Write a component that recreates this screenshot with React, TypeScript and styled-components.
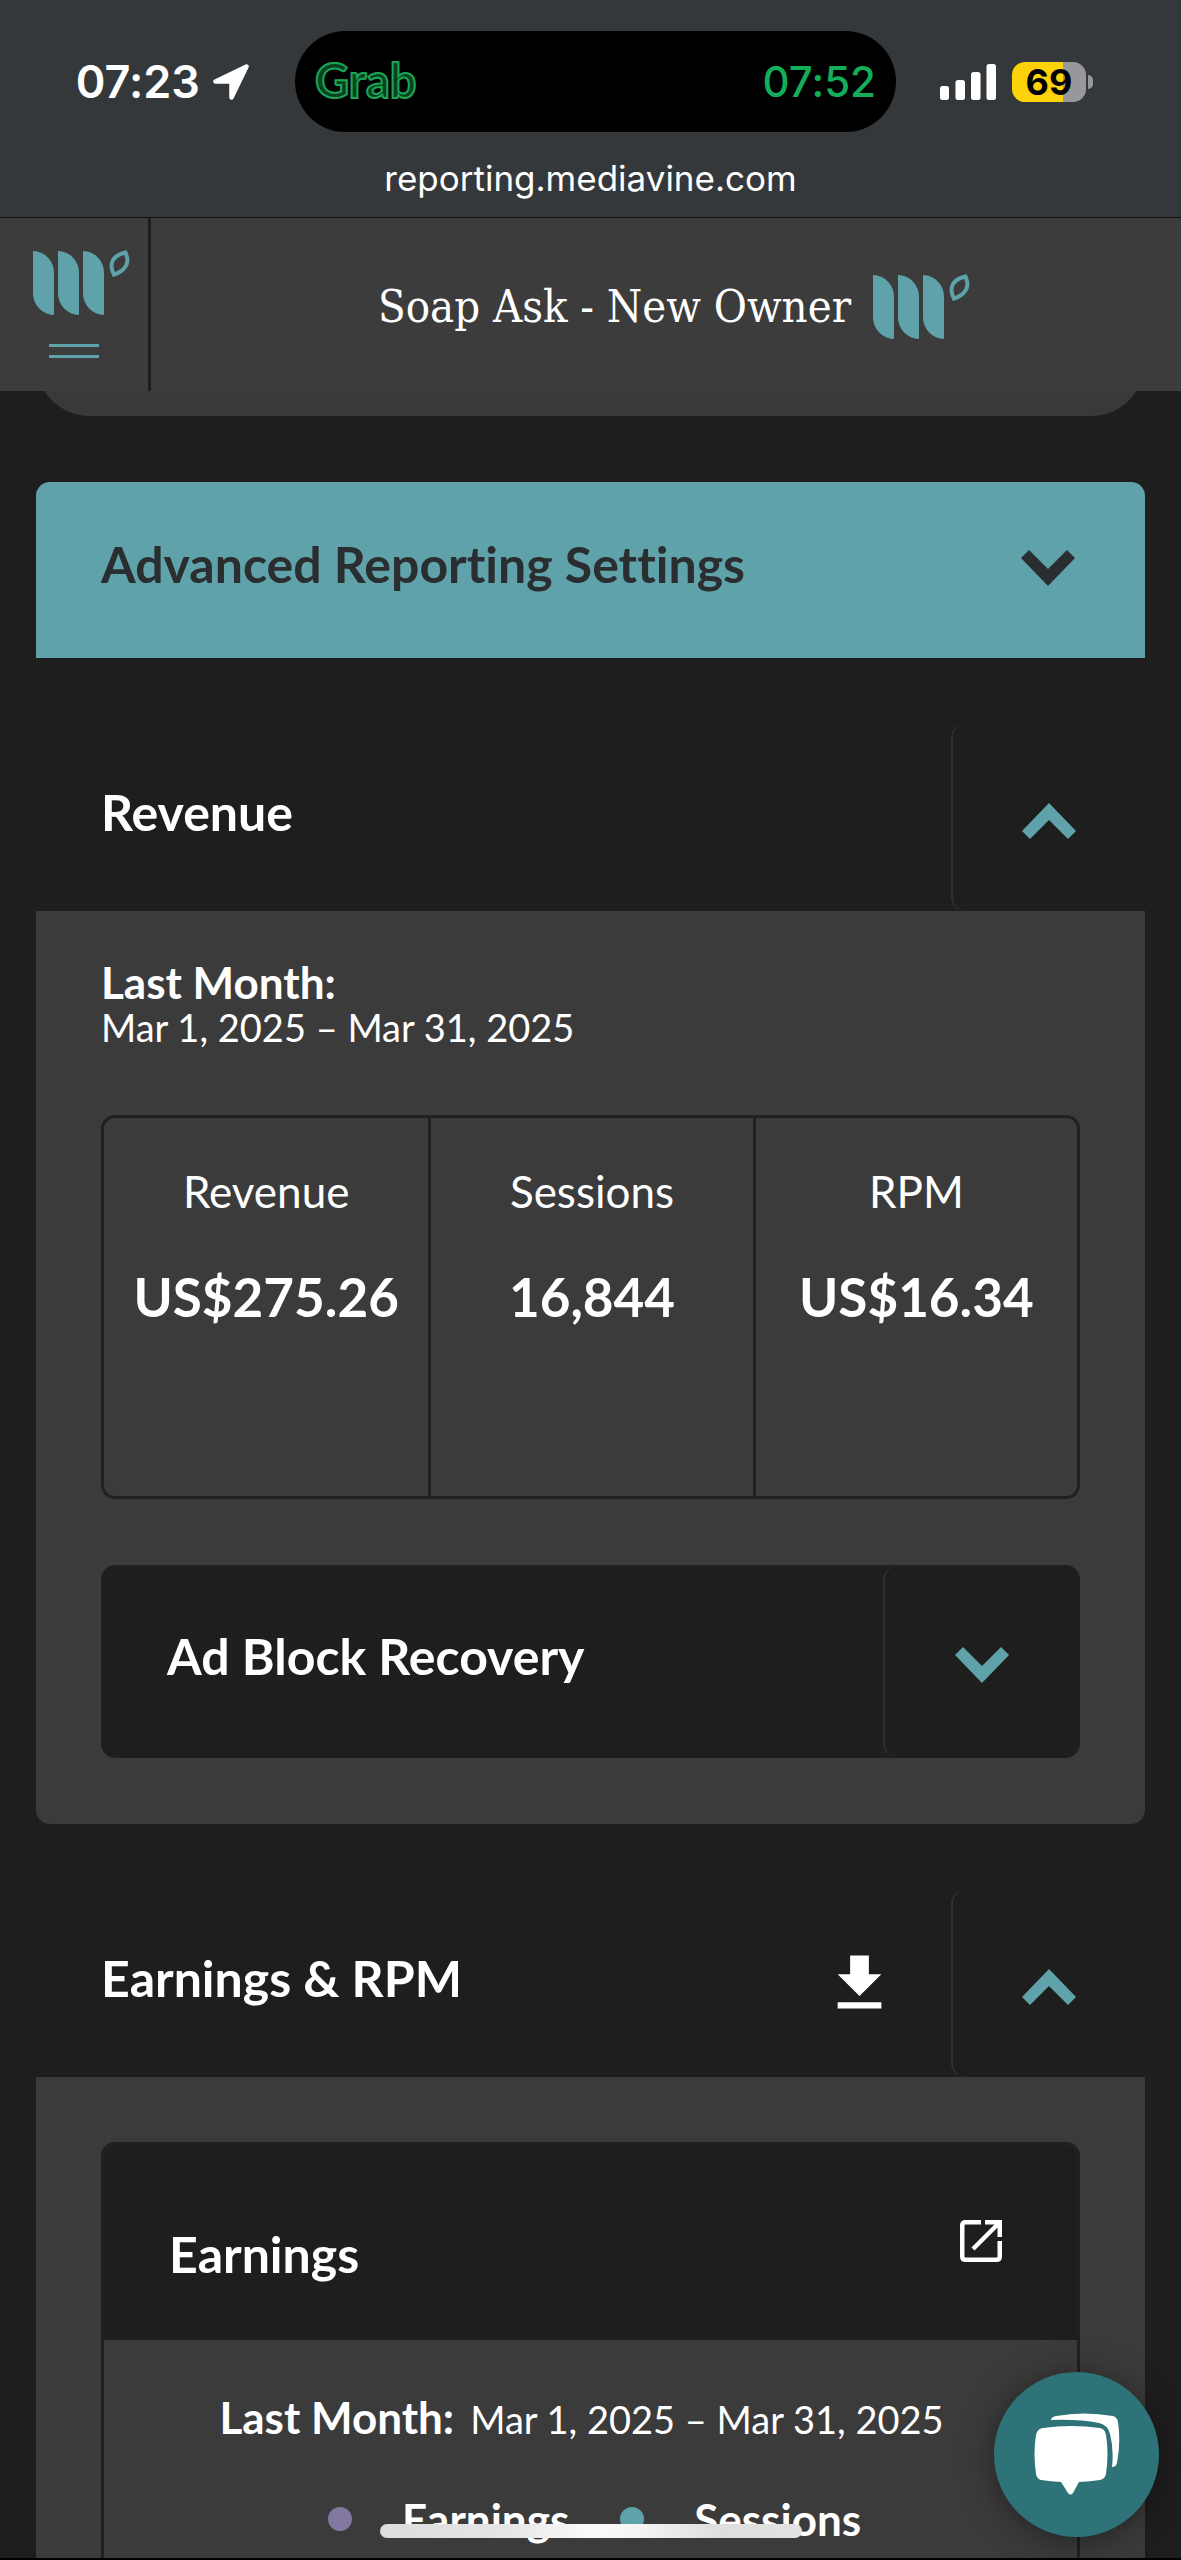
import React, { useState } from "react";
import styled, { createGlobalStyle } from "styled-components";

const teal = "#5fa2aa";
const ink = "#1e1e1e";
const panel = "#3b3b3b";

const GlobalStyle = createGlobalStyle`
  *, *::before, *::after { box-sizing: border-box; }
  body { margin: 0; background: ${ink}; }
  button { font: inherit; color: inherit; border: 0; background: none; padding: 0; cursor: pointer; }
  h1, h2, h3, p, dl, dd, dt, ul { margin: 0; padding: 0; }
  ul { list-style: none; }
`;

const Screen = styled.div`
  height: 100vh;
  min-height: 800px;
  overflow: hidden;
  position: relative;
  display: flex;
  flex-direction: column;
  background: ${ink};
  border-bottom: 2px solid #000;
  color: #fff;
  font-family: Lato, "Open Sans", sans-serif;
  font-variant-ligatures: none;
  > * { flex-shrink: 0; }
`;

/* ---------- phone chrome ---------- */

const PhoneBar = styled.div`
  background: #35383b;
  border-bottom: 1px solid #111;
  padding-top: 31px;
  height: 218px;
  font-family: Inter, "Liberation Sans", sans-serif;
`;

const StatusRow = styled.div`
  display: grid;
  grid-template-columns: 1fr 601px 1fr;
  align-items: center;
  height: 101px;
  padding-left: 10px;
`;

const Clock = styled.div`
  display: flex;
  align-items: center;
  justify-content: flex-end;
  gap: 13px;
  padding-right: 46px;
  font-size: 45px;
  font-weight: 600;
  line-height: 56px;
`;

const Island = styled.div`
  display: flex;
  align-items: center;
  justify-content: space-between;
  height: 101px;
  padding: 0 20px;
  border-radius: 51px;
  background: #000;
`;

const GrabLogo = styled.span`
  padding-bottom: 3px;
  font-family: Lato, sans-serif;
  font-size: 47px;
  font-weight: 700;
  line-height: 56px;
  color: #06441f;
  -webkit-text-stroke: 2px #1da457;
`;

const CallTime = styled.span`
  font-size: 42px;
  font-weight: 500;
  line-height: 56px;
  color: #14ad5a;
`;

const Radios = styled.div`
  display: flex;
  align-items: center;
  gap: 16px;
  padding-left: 44px;
`;

const Battery = styled.div`
  display: flex;
  align-items: center;
  gap: 2px;
`;

const BatteryCell = styled.div`
  width: 74px;
  height: 40px;
  border-radius: 13px;
  background: linear-gradient(90deg, #fdd20a 69%, #98989b 69%);
  color: #000;
  font-size: 36px;
  font-weight: 700;
  line-height: 40px;
  text-align: center;
`;

const BatteryNub = styled.div`
  width: 5px;
  height: 14px;
  border-radius: 0 7px 7px 0;
  background: #98989b;
`;

const Address = styled.div`
  padding-top: 22px;
  text-align: center;
  font-size: 35px;
  line-height: 48px;
`;

/* ---------- site header ---------- */

const SiteHeader = styled.header`
  display: flex;
  height: 173px;
  background: #3c3c3c;
`;

const MenuButton = styled.button`
  width: 151px;
  display: flex;
  flex-direction: column;
  align-items: center;
  gap: 28px;
  padding: 32px 0 0 14px;
  border-right: 3px solid ${ink};
`;

const MenuLines = styled.span`
  width: 50px;
  height: 14px;
  margin-right: 14px;
  border-top: 3px solid ${teal};
  border-bottom: 3px solid ${teal};
`;

const SiteTitle = styled.div`
  flex: 1;
  display: flex;
  align-items: center;
  justify-content: center;
  gap: 22px;
  padding: 4px 0 0 16px;
`;

const SiteName = styled.h1`
  font-family: "Roboto Slab", "DejaVu Serif Condensed", "DejaVu Serif", serif;
  font-size: 45px;
  font-weight: 400;
  line-height: 56px;
  white-space: nowrap;
`;

/* ---------- report panels ---------- */

const Main = styled.main`
  display: flex;
  flex-direction: column;
  gap: 66px;
  padding: 0 36px;
`;

const ScrolledCard = styled.div`
  height: 25px;
  overflow: hidden;
  display: flex;
  align-items: flex-end;
  &::after {
    content: "";
    flex: 1;
    height: 120px;
    border-radius: 54px;
    background: #393939;
  }
`;

const Panel = styled.section`
  border-radius: 14px;
  overflow: hidden;
  background: ${panel};
`;

const SettingsButton = styled.button`
  width: 100%;
  height: 176px;
  display: flex;
  align-items: center;
  border-radius: 14px 14px 0 0;
  background: ${teal};
  color: #2b2e30;
  text-align: left;
`;

const BarTitle = styled.h2`
  flex: 1;
  padding: 0 0 12px 65px;
  font-size: 50px;
  font-weight: 700;
  line-height: 58px;
`;

const ChevronSlot = styled.span`
  width: 194px;
  display: flex;
  justify-content: center;
  padding-bottom: 4px;
`;

const PanelBar = styled.div`
  height: 187px;
  display: flex;
  align-items: center;
  background: ${ink};
`;

const Toggle = styled.button`
  width: 194px;
  align-self: stretch;
  display: flex;
  align-items: center;
  justify-content: center;
  padding-top: 6px;
  border-left: 2px solid #303030;
  border-radius: 14px 0 0 14px;
  color: ${teal};
`;

const DownloadButton = styled.button`
  display: flex;
  margin-right: 54px;
`;

const PanelBody = styled.div<{ $top: number }>`
  display: flex;
  flex-direction: column;
  gap: 66px;
  padding: ${(p) => p.$top}px 65px 66px;
`;

const Period = styled.p`
  font-size: 38px;
  font-weight: 400;
  line-height: 43px;
`;

const PeriodLabel = styled.strong`
  font-size: 44px;
  font-weight: 700;
  line-height: 32px;
`;

const Metrics = styled.dl`
  display: grid;
  grid-template-columns: repeat(3, 1fr);
  border: 3px solid #202020;
  border-radius: 14px;
`;

const Metric = styled.div`
  padding: 48px 0 169px;
  text-align: center;
  & + & { border-left: 3px solid #202020; }
`;

const MetricName = styled.dt`
  margin-bottom: 51px;
  font-size: 44px;
  line-height: 50px;
`;

const MetricValue = styled.dd`
  font-size: 53px;
  font-weight: 700;
  line-height: 60px;
`;

const InnerBar = styled(PanelBar)`
  height: 193px;
  border: 1px solid #202020;
  border-radius: 14px;
  overflow: hidden;
  button { width: 196px; }
`;

const ChartCard = styled.article`
  border: 3px solid #202020;
  border-radius: 14px;
  overflow: hidden;
`;

const ChartBar = styled.div`
  height: 195px;
  display: flex;
  align-items: center;
  justify-content: space-between;
  padding: 0 75px 0 65px;
  background: ${ink};
`;

const ChartTitle = styled.h3`
  padding-top: 22px;
  font-size: 50px;
  font-weight: 700;
  line-height: 58px;
`;

const ChartBody = styled.div`
  display: flex;
  flex-direction: column;
  align-items: center;
  gap: 56px;
  padding: 57px 0 120px;
`;

const ChartPeriod = styled(Period)`
  padding-right: 18px;
  line-height: 44px;
  strong { margin-right: 16px; }
`;

const Legend = styled.ul`
  display: flex;
  gap: 51px;
  padding-left: 8px;
`;

const LegendItem = styled.li<{ $dot: string }>`
  display: flex;
  align-items: center;
  gap: 50px;
  font-size: 44px;
  font-weight: 700;
  line-height: 44px;
  &::before {
    content: "";
    width: 24px;
    height: 24px;
    border-radius: 50%;
    background: ${(p) => p.$dot};
  }
`;

/* ---------- floating parts ---------- */

const ChatButton = styled.button`
  position: absolute;
  right: 22px;
  bottom: 21px;
  width: 165px;
  height: 165px;
  border-radius: 50%;
  background: #2d7377;
  box-shadow: 0 4px 34px rgba(0, 0, 0, 0.4);
  svg { display: block; margin: auto; }
`;

const HomeIndicator = styled.div`
  position: absolute;
  left: 50%;
  bottom: 20px;
  width: 422px;
  height: 14px;
  margin-left: -211px;
  border-radius: 7px;
  background: linear-gradient(90deg, #dcdcdc, #e6e6e6 30%, #fafafa 50%, #f4f4f4 62%, #dedede 80%, #e2e2e2);
`;

/* ---------- drawings ---------- */

const LeafLogo = () => (
  <svg width="97" height="66" viewBox="0 0 97 66" aria-hidden="true">
    <g fill={teal}>
      <path d="M0 1A21 22 0 0 1 21 23V65A21 22 0 0 1 0 43Z" />
      <path d="M25 1A21 22 0 0 1 46 23V65A21 22 0 0 1 25 43Z" />
      <path d="M50 1A21 22 0 0 1 71 23V65A21 22 0 0 1 50 43Z" />
    </g>
    <path d="M92.5 2.5C82 5 76 11 79.500 21L81 24.500C90 22 96 15 94 7Z" fill="none" stroke={teal} strokeWidth="4" />
  </svg>
);

const Chevron = ({ up = false }: { up?: boolean }) => (
  <svg width="54" height="36" viewBox="0 0 54 36" aria-hidden="true">
    <path
      fill="currentColor"
      d={up ? "M27 0L54 28L46 36L27 17L8 36L0 28Z" : "M27 36L54 8L46 0L27 19L8 0L0 8Z"}
    />
  </svg>
);

const LocationArrow = () => (
  <svg width="36" height="36" viewBox="0 0 36 36" aria-hidden="true">
    <path d="M33.500 2.500L2.500 17.500H18.500V33.500Z" fill="#fff" stroke="#fff" strokeWidth="4.500" strokeLinejoin="round" />
  </svg>
);

const Signal = () => (
  <svg width="56" height="36" viewBox="0 0 56 36" fill="#fff" aria-hidden="true">
    <rect x="0" y="22" width="9" height="14" rx="2.500" />
    <rect x="15.500" y="16" width="9.500" height="20" rx="2.500" />
    <rect x="31" y="8" width="9.500" height="28" rx="2.500" />
    <rect x="46.500" y="0" width="9.500" height="36" rx="2.500" />
  </svg>
);

const DownloadIcon = () => (
  <svg width="75" height="75" viewBox="0 0 24 24" fill="#fff" aria-hidden="true">
    <path d="M19 9h-4V3H9v6H5l7 7 7-7zM5 18v2h14v-2H5z" />
  </svg>
);

const OpenIcon = () => (
  <svg width="42" height="42" viewBox="0 0 42 42" fill="none" stroke="#fff" strokeWidth="4.500" aria-hidden="true">
    <path d="M21 2.250H5.500Q2.250 2.250 2.250 5.500V36.500Q2.250 39.750 5.500 39.750H36.500Q39.750 39.750 39.750 36.500V21" />
    <path d="M25 2.250H39.750V17M39 3L13 29" />
  </svg>
);

const ChatIcon = () => (
  <svg width="86" height="84" viewBox="0 0 86 84" fill="#fff" aria-hidden="true">
    <path d="M9 15Q37 11 66 15Q71 16 72 22Q75 40 72 61Q71 66 66 67Q56 68.500 45 69L39 80Q36.500 83 34 80L27 69Q17 68.500 7 67Q3 66 2 61Q-1 40 2 22Q3 16 9 15Z" />
    <path d="M17 7Q17 4 22 3Q50 -2 79 3Q83 4 84 9Q87 30 83 50Q82 54 78 54Q80 36 76 21Q74 12 65 10Q45 6 17 7Z" />
  </svg>
);

const metrics = [
  { name: "Revenue", value: "US$275.26" },
  { name: "Sessions", value: "16,844" },
  { name: "RPM", value: "US$16.34" },
];

const range = "Mar 1, 2025 – Mar 31, 2025";

export default function App() {
  const [revenueOpen, setRevenueOpen] = useState(true);
  const [earningsOpen, setEarningsOpen] = useState(true);

  return (
    <Screen>
      <GlobalStyle />
      <PhoneBar>
        <StatusRow>
          <Clock>
            07:23
            <LocationArrow />
          </Clock>
          <Island>
            <GrabLogo>Grab</GrabLogo>
            <CallTime>07:52</CallTime>
          </Island>
          <Radios>
            <Signal />
            <Battery>
              <BatteryCell>69</BatteryCell>
              <BatteryNub />
            </Battery>
          </Radios>
        </StatusRow>
        <Address>reporting.mediavine.com</Address>
      </PhoneBar>

      <SiteHeader>
        <MenuButton aria-label="Menu">
          <LeafLogo />
          <MenuLines />
        </MenuButton>
        <SiteTitle>
          <SiteName>Soap Ask - New Owner</SiteName>
          <LeafLogo />
        </SiteTitle>
      </SiteHeader>

      <Main>
        <ScrolledCard />

        <SettingsButton>
          <BarTitle as="span">Advanced Reporting Settings</BarTitle>
          <ChevronSlot>
            <Chevron />
          </ChevronSlot>
        </SettingsButton>

        <Panel>
          <PanelBar>
            <BarTitle>Revenue</BarTitle>
            <Toggle aria-label="Toggle Revenue" aria-expanded={revenueOpen} onClick={() => setRevenueOpen(!revenueOpen)}>
              <Chevron up={revenueOpen} />
            </Toggle>
          </PanelBar>
          {revenueOpen && (
            <PanelBody $top={52}>
              <Period>
                <PeriodLabel>Last Month:</PeriodLabel>
                <br />
                {range}
              </Period>
              <Metrics>
                {metrics.map((m) => (
                  <Metric key={m.name}>
                    <MetricName>{m.name}</MetricName>
                    <MetricValue>{m.value}</MetricValue>
                  </Metric>
                ))}
              </Metrics>
              <InnerBar>
                <BarTitle as="h3">Ad Block Recovery</BarTitle>
                <Toggle aria-label="Toggle Ad Block Recovery" aria-expanded={false}>
                  <Chevron />
                </Toggle>
              </InnerBar>
            </PanelBody>
          )}
        </Panel>

        <Panel>
          <PanelBar>
            <BarTitle>Earnings &amp; RPM</BarTitle>
            <DownloadButton aria-label="Download">
              <DownloadIcon />
            </DownloadButton>
            <Toggle aria-label="Toggle Earnings" aria-expanded={earningsOpen} onClick={() => setEarningsOpen(!earningsOpen)}>
              <Chevron up={earningsOpen} />
            </Toggle>
          </PanelBar>
          {earningsOpen && (
            <PanelBody $top={65}>
              <ChartCard>
                <ChartBar>
                  <ChartTitle>Earnings</ChartTitle>
                  <button aria-label="Open Earnings">
                    <OpenIcon />
                  </button>
                </ChartBar>
                <ChartBody>
                  <ChartPeriod>
                    <PeriodLabel>Last Month:</PeriodLabel>
                    {range}
                  </ChartPeriod>
                  <Legend>
                    <LegendItem $dot="#8379a0">Earnings</LegendItem>
                    <LegendItem $dot={teal}>Sessions</LegendItem>
                  </Legend>
                </ChartBody>
              </ChartCard>
            </PanelBody>
          )}
        </Panel>
      </Main>

      <HomeIndicator />
      <ChatButton aria-label="Open chat">
        <ChatIcon />
      </ChatButton>
    </Screen>
  );
}
